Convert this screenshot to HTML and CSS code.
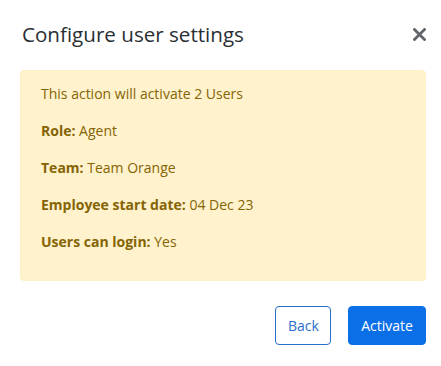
FILE: index.html
```html
<!DOCTYPE html>
<html>
<head>
<meta charset="utf-8">
<link rel="stylesheet" href="styles.css">
</head>
<body>
<div class="modal">
  <div class="modal-header">
    <h5 class="modal-title">Configure user settings</h5>
    <button class="close" aria-label="Close">
      <svg width="13" height="13" viewBox="0 0 13 13"><path d="M1.5 1.5 L11.5 11.5 M11.5 1.5 L1.5 11.5" stroke="#60656a" stroke-width="2.8" stroke-linecap="square"/></svg>
    </button>
  </div>
  <div class="alert">
    <p>This action will activate 2 Users</p>
    <p><b>Role:</b> Agent</p>
    <p><b>Team:</b> Team Orange</p>
    <p><b>Employee start date:</b> 04 Dec 23</p>
    <p><b>Users can login:</b> Yes</p>
  </div>
  <div class="footer">
    <button class="btn btn-outline">Back</button>
    <button class="btn btn-primary">Activate</button>
  </div>
</div>
</body>
</html>
```

FILE: styles.css
```css
* { box-sizing: border-box; }
body {
  margin: 0;
  background: #fff;
  font-family: "Open Sans", sans-serif;
}
.modal {
  padding: 0 15px 0 20px;
}
.modal-header {
  display: flex;
  justify-content: space-between;
  align-items: flex-start;
  padding: 19px 0 0 2px;
  height: 70px;
}
.modal-title {
  margin: 0;
  font-size: 20.6px;
  line-height: 30px;
  font-weight: 400;
  color: #2a2f34;
}
.close {
  border: 0;
  background: none;
  padding: 0;
  margin-top: 9px;
  width: 13px;
  height: 13px;
  display: flex;
}
.alert {
  background: #fff2cc;
  border: 1px solid #fdefc4;
  border-radius: 4px;
  padding: 12px 20px;
  color: #856404;
  font-size: 14px;
  line-height: 21px;
}
.alert p {
  margin: 0 0 16px 0;
}
.alert b {
  font-weight: 700;
}
.footer {
  display: flex;
  justify-content: flex-end;
  gap: 17px;
  margin-top: 25px;
}
.btn {
  font-family: "Open Sans", sans-serif;
  font-size: 14px;
  line-height: 21px;
  padding: 8px 12px;
  border-radius: 4px;
  border: 1px solid #2c6ecb;
  height: 39px;
}
.btn-outline {
  background: #fff;
  color: #2c6ecb;
  width: 56px;
}
.btn-primary {
  background: #0b6fe8;
  border-color: #0b6fe8;
  color: #fff;
  width: 78px;
}
```
